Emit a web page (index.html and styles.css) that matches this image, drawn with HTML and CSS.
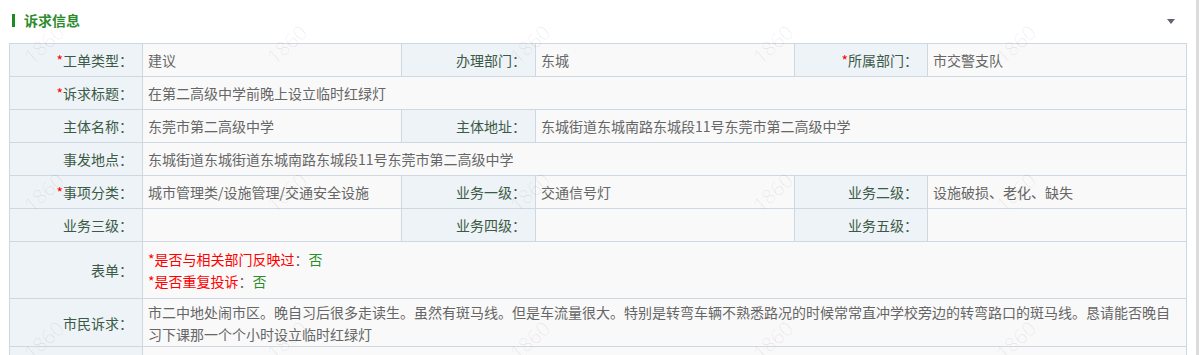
FILE: index.html
```html
<!DOCTYPE html>
<html lang="zh-CN">
<head>
<meta charset="utf-8">
<title>诉求信息</title>
<link rel="stylesheet" href="styles.css">
</head>
<body>
<div class="page">
  <div class="section">
    <div class="section-head">
      <span class="bar"></span>
      <span class="title">诉求信息</span>
      <span class="toggle"></span>
    </div>
    <div class="grid">
      <div class="lab"><span class="req">*</span>工单类型：</div>
      <div class="val">建议</div>
      <div class="lab">办理部门：</div>
      <div class="val">东城</div>
      <div class="lab"><span class="req">*</span>所属部门：</div>
      <div class="val">市交警支队</div>

      <div class="lab"><span class="req">*</span>诉求标题：</div>
      <div class="val span5">在第二高级中学前晚上设立临时红绿灯</div>

      <div class="lab">主体名称：</div>
      <div class="val">东莞市第二高级中学</div>
      <div class="lab">主体地址：</div>
      <div class="val span3">东城街道东城南路东城段11号东莞市第二高级中学</div>

      <div class="lab">事发地点：</div>
      <div class="val span5">东城街道东城街道东城南路东城段11号东莞市第二高级中学</div>

      <div class="lab"><span class="req">*</span>事项分类：</div>
      <div class="val">城市管理类/设施管理/交通安全设施</div>
      <div class="lab">业务一级：</div>
      <div class="val">交通信号灯</div>
      <div class="lab">业务二级：</div>
      <div class="val">设施破损、老化、缺失</div>

      <div class="lab">业务三级：</div>
      <div class="val"></div>
      <div class="lab">业务四级：</div>
      <div class="val"></div>
      <div class="lab">业务五级：</div>
      <div class="val"></div>

      <div class="lab center">表单：</div>
      <div class="val span5 form">
        <div><span class="red">*是否与相关部门反映过</span>：<span class="green">否</span></div>
        <div><span class="red">*是否重复投诉</span>：<span class="green">否</span></div>
      </div>

      <div class="lab center">市民诉求：</div>
      <div class="val span5 text">市二中地处闹市区。晚自习后很多走读生。虽然有斑马线。但是车流量很大。特别是转弯车辆不熟悉路况的时候常常直冲学校旁边的转弯路口的斑马线。恳请能否晚自习下课那一个个小时设立临时红绿灯</div>

      <div class="lab"></div>
      <div class="val span5"></div>
    </div>
  </div>
  <div class="watermark" aria-hidden="true">
    <span>1860</span><span>1860</span><span>1860</span><span>1860</span><span>1860</span>
    <span>1860</span><span>1860</span><span>1860</span><span>1860</span><span>1860</span>
    <span>1860</span><span>1860</span><span>1860</span><span>1860</span><span>1860</span>
  </div>
</div>
</body>
</html>
```
FILE: styles.css
```css
html, body {
  margin: 0;
  padding: 0;
  background: #ffffff;
  overflow: hidden;
}

body {
  font-family: "Noto Sans CJK SC", "Noto Sans", sans-serif;
  font-size: 14px;
  color: #666666;
}

.page {
  position: relative;
  width: 1196px;
  height: 355px;
  border-right: 3px solid #dcdcdc;
  overflow: hidden;
}

.section {
  padding-left: 9px;
}

.section-head {
  height: 43px;
  display: flex;
  align-items: center;
  padding-left: 3px;
  box-sizing: border-box;
  padding-bottom: 3px;
}

.bar {
  width: 3px;
  height: 13px;
  background: #1f8a1f;
  margin-right: 9px;
}

.title {
  font-size: 14px;
  font-weight: bold;
  color: #2e8b2e;
  line-height: 20px;
}

.toggle {
  margin-left: auto;
  margin-right: 21px;
  width: 0;
  height: 0;
  border-left: 4px solid transparent;
  border-right: 4px solid transparent;
  border-top: 5px solid #5f6670;
  margin-top: 2px;
}

.grid {
  display: grid;
  grid-template-columns: 132px 258px 133px 258px 132px 258px;
  grid-template-rows: repeat(6, 32px) 56px 47px 32px;
  gap: 1px;
  padding: 1px;
  width: 1178px;
  box-sizing: border-box;
  background: #cdd8e2;
}

.lab {
  background: #eef3f7;
  color: #3b5a46;
  text-align: right;
  padding-right: 9px;
  line-height: 32px;
  white-space: nowrap;
}

.lab.center {
  display: flex;
  align-items: center;
  justify-content: flex-end;
  line-height: 22px;
}

.req {
  color: #ff0000;
}

.val {
  background: #f9f9f9;
  color: #666666;
  padding: 0 7px 0 5px;
  line-height: 32px;
  white-space: nowrap;
}

.span5 {
  grid-column: span 5;
}

.span3 {
  grid-column: span 3;
}

.form {
  padding-top: 6px;
  line-height: 22px;
}

.red {
  color: #ff0000;
}

.green {
  color: #2a8f2a;
}

.text {
  white-space: normal;
  line-height: 22px;
  padding-top: 2px;
}

.watermark {
  position: absolute;
  left: -78px;
  top: -30px;
  display: grid;
  grid-template-columns: repeat(5, 243px);
  grid-template-rows: repeat(3, 148px);
  pointer-events: none;
}

.watermark span {
  display: flex;
  align-items: center;
  justify-content: center;
  font-family: "Open Sans", "Liberation Sans", sans-serif;
  font-weight: 300;
  font-size: 20px;
  color: rgba(0, 0, 0, 0.08);
  transform: rotate(-42deg);
}
```
